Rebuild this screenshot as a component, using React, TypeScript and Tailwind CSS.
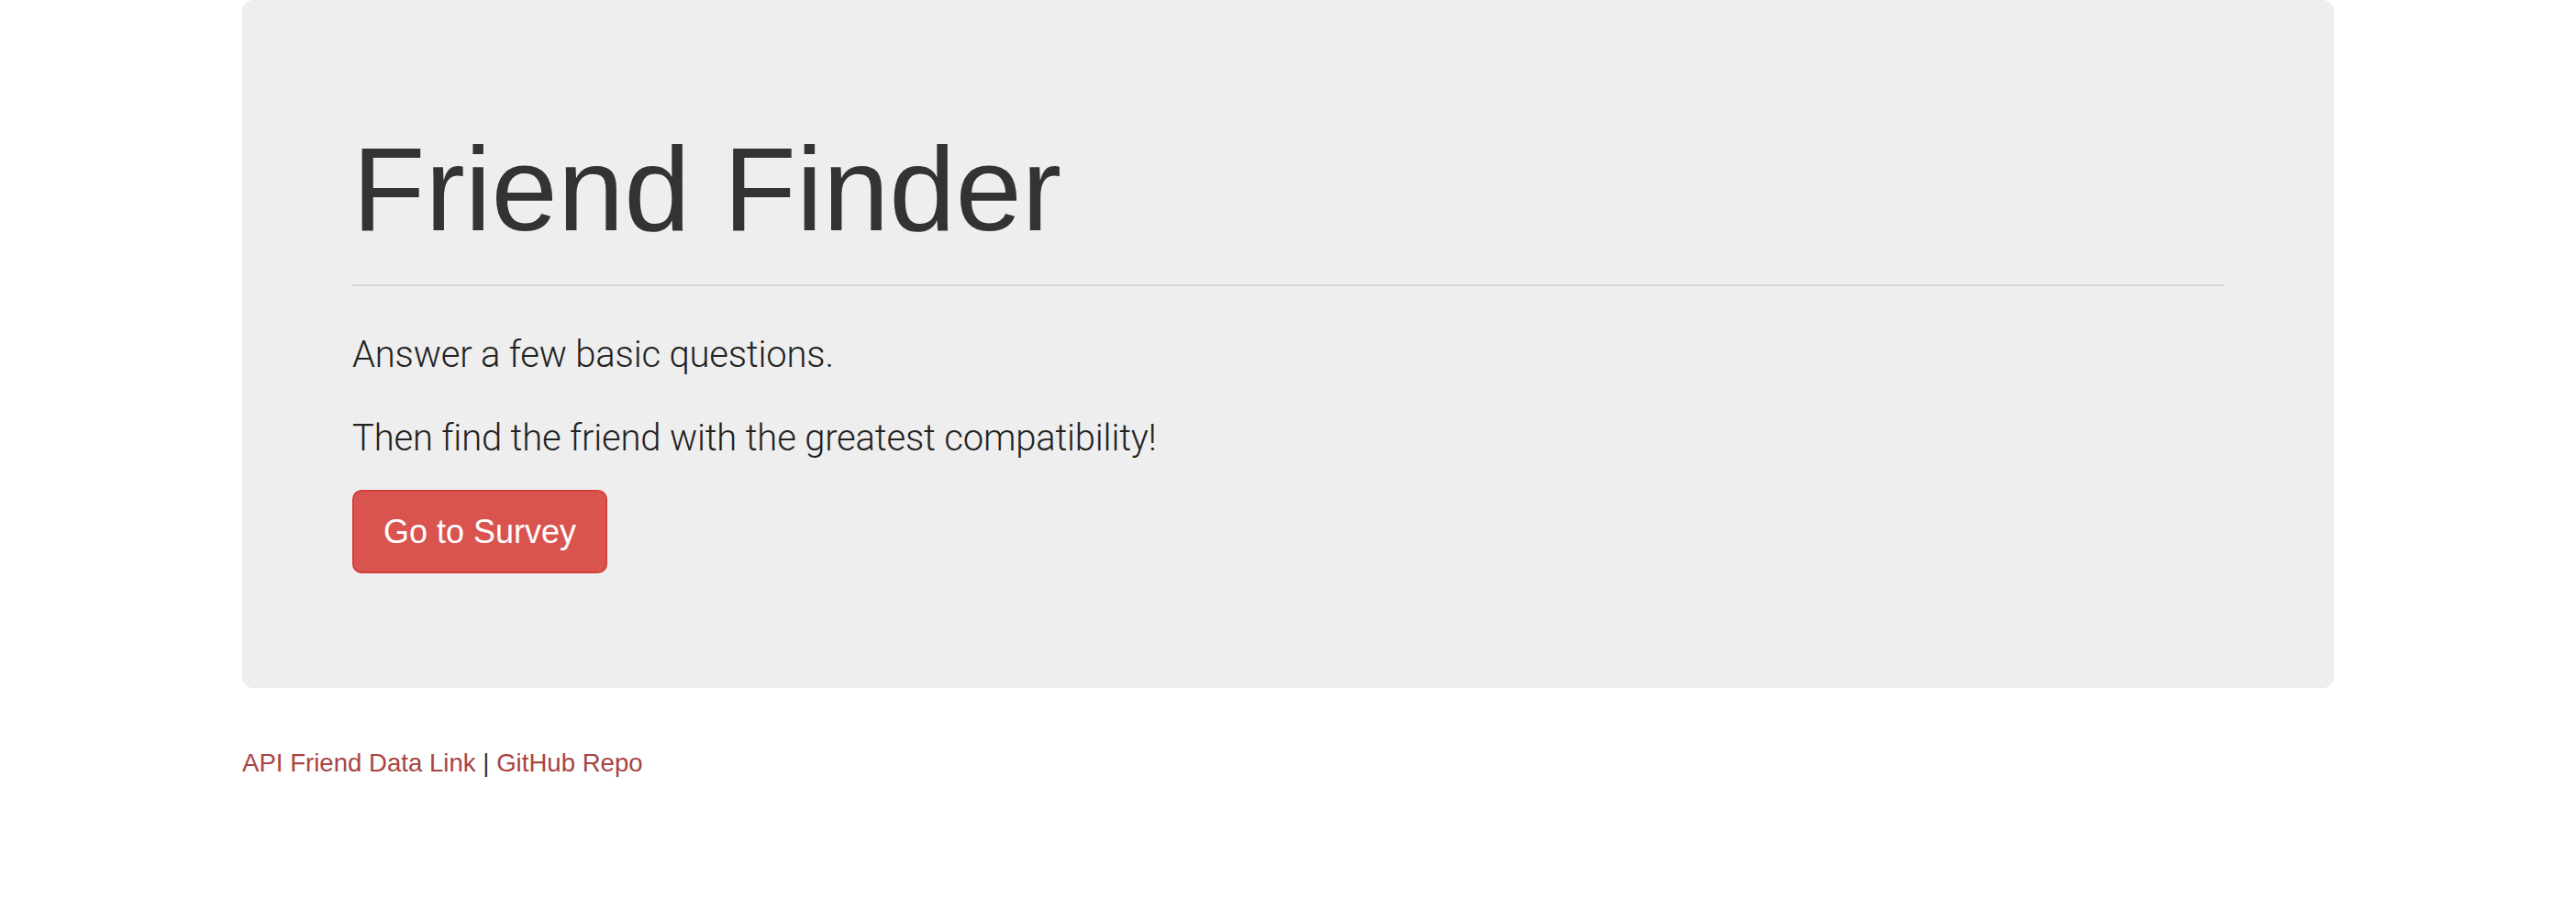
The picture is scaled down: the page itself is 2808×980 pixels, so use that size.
export default function App() {
  return (
    <div className="min-h-screen bg-white font-['Liberation_Sans',Arial,sans-serif] text-[#333]">
      <div className="mx-auto w-[2280px]">
        <div className="rounded-[12px] bg-[#eeeeee] px-[120px] pt-[141px] pb-[125px]">
          <h1 className="text-[130px] leading-[130px] font-normal text-[#333]">Friend Finder</h1>
          <hr className="mt-[39px] border-t-2 border-[#d6d6d6]" />
          <div className="mt-[46px] font-['Roboto',sans-serif] font-light text-[40px] leading-[58px] tracking-[-0.2px] text-[#222]">
            <p className="mb-[33px]">Answer a few basic questions.</p>
            <p>Then find the friend with the greatest compatibility!</p>
          </div>
          <button className="mt-[27px] h-[91px] w-[278px] rounded-[10px] border-2 border-[#d43f3a] bg-[#d9534f] text-[36px] text-white">
            Go to Survey
          </button>
        </div>
        <div className="mt-[62px] text-[27.6px] leading-[40px]">
          <a href="#" className="text-[#a94442]">API Friend Data Link</a>
          <span className="text-[#333]"> | </span>
          <a href="#" className="text-[#a94442]">GitHub Repo</a>
        </div>
      </div>
    </div>
  )
}
